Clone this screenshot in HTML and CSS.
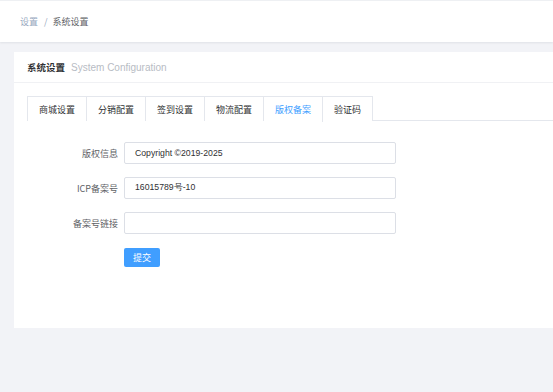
FILE: index.html
```html
<!DOCTYPE html>
<html lang="zh">
<head>
<meta charset="utf-8">
<link rel="stylesheet" href="styles.css">
</head>
<body>
<div class="topbar">
  <span class="crumb-link">设置</span><span class="crumb-sep">/</span><span class="crumb-current">系统设置</span>
</div>
<div class="main">
  <div class="card">
    <div class="card-header">
      <span class="card-title">系统设置</span><span class="card-sub">System Configuration</span>
    </div>
    <div class="card-body">
      <div class="tabs">
        <div class="tab">商城设置</div>
        <div class="tab">分销配置</div>
        <div class="tab">签到设置</div>
        <div class="tab">物流配置</div>
        <div class="tab active">版权备案</div>
        <div class="tab">验证码</div>
      </div>
      <div class="form">
        <div class="row">
          <label class="label">版权信息</label>
          <div class="input">Copyright ©2019-2025</div>
        </div>
        <div class="row">
          <label class="label">ICP备案号</label>
          <div class="input">16015789号-10</div>
        </div>
        <div class="row">
          <label class="label">备案号链接</label>
          <div class="input"></div>
        </div>
        <div class="row">
          <span class="label"></span>
          <button class="btn">提交</button>
        </div>
      </div>
    </div>
  </div>
</div>
</body>
</html>
```
FILE: styles.css
```css
* { box-sizing: border-box; }
html, body { margin: 0; padding: 0; }
body {
  width: 553px;
  height: 392px;
  overflow: hidden;
  background: #f2f3f7;
  font-family: "Noto Sans CJK SC", "Liberation Sans", sans-serif;
  font-size: 9px;
  color: #606266;
}
.topbar {
  height: 42px;
  background: #fff;
  display: flex;
  align-items: center;
  padding-left: 20px;
  box-shadow: 0 1px 2px rgba(0,21,41,0.08);
  border-top: 1px solid #eef0f3;
}
.crumb-link { color: #97a8be; }
.crumb-sep { color: #97a8be; margin: 0 5px 0 6px; }
.crumb-current { color: #606266; }
.main { padding: 10px 0 0 14px; }
.card {
  background: #fff;
  width: 560px;
  height: 276px;
}
.card-header {
  height: 31px;
  display: flex;
  align-items: center;
  padding-left: 13px;
  border-bottom: 1px solid #f0f1f4;
}
.card-title { font-size: 9.5px; font-weight: bold; color: #303133; }
.card-sub {
  margin-left: 6px;
  color: #b8bcc4;
  font-family: "Liberation Sans", sans-serif;
  font-size: 10px;
}
.card-body { padding: 13px 0 0 13px; }
.tabs {
  display: flex;
  height: 25px;
  border-bottom: 1px solid #e4e7ed;
}
.tab {
  height: 25px;
  padding: 0 11px;
  display: flex;
  align-items: center;
  border: 1px solid #e4e7ed;
  border-left: none;
  border-bottom: none;
  background: #fff;
  color: #303133;
}
.tab:first-child { border-left: 1px solid #e4e7ed; }
.tab.active {
  color: #409eff;
  height: 26px;
  margin-bottom: -1px;
}
.form { padding-top: 21px; }
.row {
  display: flex;
  align-items: center;
  margin-bottom: 13px;
}
.label {
  width: 97px;
  text-align: right;
  padding-right: 6px;
  color: #606266;
  flex-shrink: 0;
}
.input {
  width: 272px;
  height: 22px;
  border: 1px solid #dcdfe6;
  border-radius: 2px;
  padding-left: 10px;
  display: flex;
  align-items: center;
  color: #303133;
  font-family: "Liberation Sans", sans-serif;
  font-size: 8.7px;
}
.btn {
  width: 36px;
  height: 19px;
  border: none;
  border-radius: 2px;
  background: #409eff;
  color: #fff;
  font-family: "Noto Sans CJK SC", sans-serif;
  font-size: 9px;
  padding: 0;
  margin-top: 1px;
}
```
